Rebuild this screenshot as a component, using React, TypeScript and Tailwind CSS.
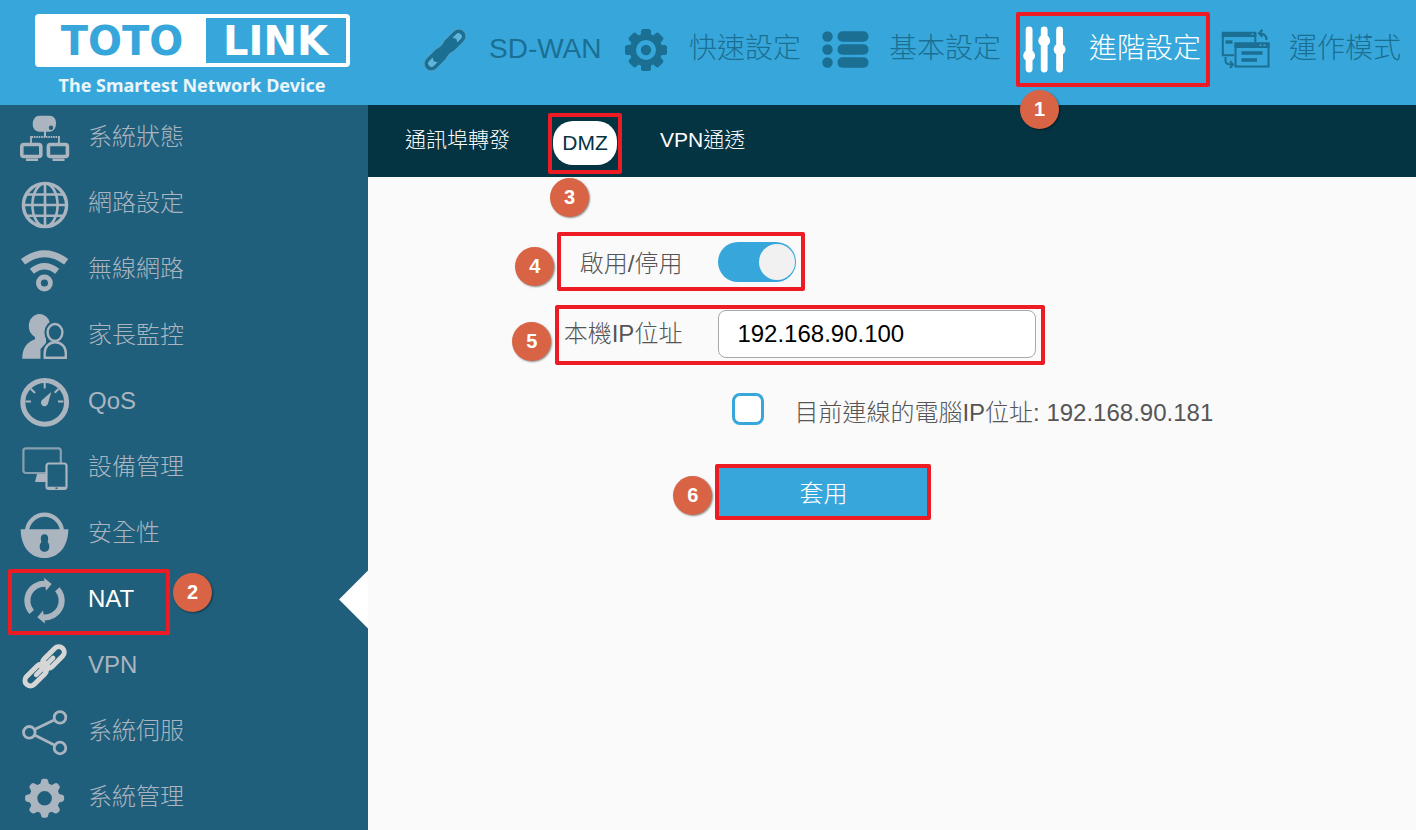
import { useState, type ReactNode } from "react";

type NavItem = {
  label: string;
  icon: ReactNode;
};

const GEAR_TEETH = [0, 45, 90, 135, 180, 225, 270, 315];

function SolidChainIcon() {
  return (
    <svg viewBox="0 0 48 48" className="size-12" aria-hidden="true">
      <g transform="translate(24 24) rotate(-45)">
        <path
          d="M-19.5 -7H-6Q0 -4.6 6 -7H19.5A7 7 0 0 1 19.5 7H6Q0 4.6 -6 7H-19.5A7 7 0 0 1 -19.5 -7Z"
          fill="currentColor"
          stroke="#6f9fb3"
          strokeWidth="0.6"
        />
        <path d="M-19 -3.4H-14L-16 0L-14 3.4H-19A3.4 3.4 0 0 1 -19 -3.4Z" fill="#5fb4da" />
        <path d="M19 -3.4H14L16 0L14 3.4H19A3.4 3.4 0 0 0 19 -3.4Z" fill="#5fb4da" />
      </g>
    </svg>
  );
}

function ChainIcon() {
  return (
    <svg
      viewBox="0 0 50 50"
      className="size-[50px] text-[#d6d6d6]"
      fill="none"
      stroke="currentColor"
      aria-hidden="true"
    >
      <g transform="translate(24.6 25.3) rotate(-45)">
        <rect x="-25.5" y="-5.5" width="26" height="11" rx="5.5" strokeWidth="5" />
        <rect x="-0.5" y="-5.5" width="26" height="11" rx="5.5" strokeWidth="5" />
        <path d="M-12 0H12" strokeWidth="4.6" strokeLinecap="round" />
        <path d="M-5 0H5" strokeWidth="10" />
      </g>
    </svg>
  );
}

function QuickSetupIcon() {
  return (
    <svg viewBox="0 0 48 48" className="size-12" aria-hidden="true">
      <g transform="translate(25 24)" fill="currentColor">
        {GEAR_TEETH.map((angle) => (
          <rect key={angle} x="-5" y="-21" width="10" height="10" rx="2.5" transform={`rotate(${angle})`} />
        ))}
        <circle r="13.2" fill="none" stroke="currentColor" strokeWidth="6.4" />
        <circle r="5.2" />
      </g>
    </svg>
  );
}

function ListIcon() {
  return (
    <svg viewBox="0 0 48 48" className="size-12" fill="currentColor" aria-hidden="true">
      {[11, 24, 37].map((y) => (
        <g key={y}>
          <circle cx="6.5" cy={y - 0.5} r="5.2" />
          <rect x="16.5" y={y - 5.8} width="31" height="10.6" rx="5" />
        </g>
      ))}
    </svg>
  );
}

function SlidersIcon() {
  return (
    <svg viewBox="0 0 48 48" className="size-12" fill="currentColor" aria-hidden="true">
      <rect x="4.7" y="0.5" width="6.8" height="46" rx="3.4" />
      <rect x="19.8" y="0.5" width="6.8" height="46" rx="3.4" />
      <rect x="35.2" y="0.5" width="6.8" height="46" rx="3.4" />
      <circle cx="8.1" cy="29.7" r="5.9" />
      <circle cx="23.2" cy="14.7" r="5.9" />
      <circle cx="38.6" cy="23.3" r="5.9" />
    </svg>
  );
}

function ModeIcon() {
  return (
    <svg viewBox="0 0 50 48" className="h-12 w-[50px]" fill="none" stroke="currentColor" aria-hidden="true">
      <path d="M2.8 7V29.2H14M35.3 7V16" strokeWidth="2" />
      <path d="M1.8 5.7H36.3V11H1.8Z" fill="currentColor" stroke="none" />
      <path d="M5.5 16H12.5" strokeWidth="3.4" />
      <rect x="15.5" y="17.5" width="33" height="23" strokeWidth="2" />
      <path d="M14.5 16.5H49.5V22H14.5Z" fill="currentColor" stroke="none" />
      <path d="M21.5 27H42.5M21.5 34H37" strokeWidth="3.6" />
      <path d="M39 7.3C44 7.3 46.5 9.5 46.5 14M42.5 3.8L39 7.3L42.5 10.8" strokeWidth="2" />
      <path d="M5.5 31V35C5.5 37.5 7 38.6 12.5 38.6M10 35.2L13 38.6L10 42" strokeWidth="2" />
      <path d="M31.5 8.3h2M39.5 19.3h2M43.5 19.3h2" stroke="#37a7db" strokeWidth="1.5" />
    </svg>
  );
}

function MenuIcon({ children }: { children: ReactNode }) {
  return (
    <svg viewBox="0 0 50 50" className="size-[50px]" fill="none" stroke="currentColor" aria-hidden="true">
      {children}
    </svg>
  );
}

const topItems: NavItem[] = [
  { label: "SD-WAN", icon: <SolidChainIcon /> },
  { label: "快速設定", icon: <QuickSetupIcon /> },
  { label: "基本設定", icon: <ListIcon /> },
  { label: "進階設定", icon: <SlidersIcon /> },
  { label: "運作模式", icon: <ModeIcon /> },
];

const sideItems: NavItem[] = [
  {
    label: "系統狀態",
    icon: (
      <MenuIcon>
        <path
          d="M19 2.7H30C34 2.7 36 6.5 36 10C36 15 33.5 18.7 29.5 18.7H19.5C15 18.7 12.7 15 12.7 11.5C12.7 6.5 15 3 19 2.7Z"
          fill="currentColor"
          stroke="none"
        />
        <circle cx="31" cy="14.7" r="2.2" fill="#1f5f7b" stroke="none" />
        <path d="M25 18V24" strokeWidth="2" />
        <path d="M11.5 24H39" strokeWidth="2" strokeDasharray="1.6 0.8" />
        <path d="M11 23V30M39 23V30" strokeWidth="1.8" />
        <rect x="1.8" y="31.5" width="19" height="12" rx="2" strokeWidth="3.6" />
        <rect x="28.4" y="31.5" width="19" height="12" rx="2" strokeWidth="3.6" />
        <path d="M6 46.7H18M32.5 46.7H44.5" strokeWidth="2.6" />
      </MenuIcon>
    ),
  },
  {
    label: "網路設定",
    icon: (
      <MenuIcon>
        <circle cx="25" cy="26" r="21.6" strokeWidth="3.4" />
        <ellipse cx="25" cy="26" rx="12.6" ry="21.6" strokeWidth="2.6" />
        <path d="M25 5V47M4 26H46M7 15.5H43M7 36.8H43" strokeWidth="2.6" />
      </MenuIcon>
    ),
  },
  {
    label: "無線網路",
    icon: (
      <MenuIcon>
        <path d="M3 16.8Q24.5 0.5 46.2 16.8" strokeWidth="6.8" />
        <path d="M11.8 26.3Q24.5 16.3 37.2 26.3" strokeWidth="6.4" />
        <circle cx="24.4" cy="38" r="6" strokeWidth="4.8" />
      </MenuIcon>
    ),
  },
  {
    label: "家長監控",
    icon: (
      <MenuIcon>
        <ellipse cx="19.5" cy="15" rx="10.7" ry="12" fill="currentColor" stroke="none" />
        <path d="M2.3 47.7C2.3 37 7 31 15 28.3V25H26V32L20.5 38V47.7Z" fill="currentColor" stroke="none" />
        <ellipse cx="35" cy="21.5" rx="7.6" ry="8.7" fill="#1f5f7b" stroke="#1f5f7b" strokeWidth="6" />
        <path
          d="M24.7 46.8V42C24.7 36 29 31.3 35.2 31.3S45.8 36 45.8 42V46.8Z"
          fill="#1f5f7b"
          stroke="#1f5f7b"
          strokeWidth="5"
        />
        <ellipse cx="35" cy="21.5" rx="7.4" ry="8.5" strokeWidth="2.4" />
        <path d="M24.7 46.8V42C24.7 36 29 31.3 35.2 31.3S45.8 36 45.8 42V46.8Z" strokeWidth="2.4" />
      </MenuIcon>
    ),
  },
  {
    label: "QoS",
    icon: (
      <MenuIcon>
        <circle cx="24.7" cy="25.3" r="21.9" strokeWidth="5" />
        <path d="M24.7 6V11.5M5.5 24.5H11M38 24.5H43.5M10.7 11.7L15 16M38.7 11.7L34.7 15.7" strokeWidth="2" />
        <path d="M31.3 15L28 26.5A3.6 3.6 0 1 1 22 23Z" fill="currentColor" stroke="none" />
      </MenuIcon>
    ),
  },
  {
    label: "設備管理",
    icon: (
      <MenuIcon>
        <rect x="3.4" y="5.4" width="37.4" height="24.6" rx="2.5" strokeWidth="2.2" opacity="0.75" />
        <path d="M17 31H26V39H15Z" fill="currentColor" stroke="none" />
        <rect x="26.5" y="20.5" width="20" height="25.5" rx="2.5" fill="#1f5f7b" strokeWidth="2.2" />
        <path d="M28 45.2H45" strokeWidth="3" />
        <path d="M35.5 45.2H37.5" stroke="#1f5f7b" strokeWidth="1.4" />
      </MenuIcon>
    ),
  },
  {
    label: "安全性",
    icon: (
      <MenuIcon>
        <path d="M7 21A17.7 18 0 0 1 42 21" strokeWidth="4.2" />
        <path
          fillRule="evenodd"
          d="M0.7 20.2H48.3C48.3 37 39 49 24.5 49S0.7 37 0.7 20.2ZM24.5 25.3C21.8 25.3 20.8 27 20.8 29.5L21.3 33C20 34.5 19.7 36 19.7 37.7C19.7 41 21.8 42.8 24.5 42.8S29.3 41 29.3 37.7C29.3 36 29 34.5 27.7 33L28.2 29.5C28.2 27 27.2 25.3 24.5 25.3Z"
          fill="currentColor"
          stroke="none"
        />
      </MenuIcon>
    ),
  },
  {
    label: "NAT",
    icon: (
      <MenuIcon>
        {[0, 180].map((angle) => (
          <g key={angle} transform={`rotate(${angle} 24.5 25.6)`}>
            <path d="M11.7 36.9A16.8 16.8 0 0 1 26 8.9" strokeWidth="6" />
            <path d="M24 2.8L31.7 9L26 15.7Z" fill="currentColor" stroke="none" />
          </g>
        ))}
      </MenuIcon>
    ),
  },
  { label: "VPN", icon: <ChainIcon /> },
  {
    label: "系統伺服",
    icon: (
      <MenuIcon>
        <path d="M14.5 22.6L34.7 12.8M14.5 28L34.7 38.3" strokeWidth="2.8" />
        <circle cx="9.3" cy="25.3" r="5.8" strokeWidth="2.8" />
        <circle cx="40" cy="10.4" r="5.8" strokeWidth="2.8" />
        <circle cx="40" cy="41" r="5.8" strokeWidth="2.8" />
      </MenuIcon>
    ),
  },
  {
    label: "系統管理",
    icon: (
      <MenuIcon>
        <g transform="translate(24.6 25.3)">
          {GEAR_TEETH.map((angle) => (
            <path
              key={angle}
              d="M-4.8 -13L-3.2 -18.2Q-2.6 -19.5 -1 -19.5H1Q2.6 -19.5 3.2 -18.2L4.8 -13Z"
              fill="currentColor"
              stroke="none"
              transform={`rotate(${angle})`}
            />
          ))}
          <circle r="11.2" strokeWidth="7.8" />
        </g>
      </MenuIcon>
    ),
  },
];

function Highlight({ className }: { className: string }) {
  return (
    <span
      className={`pointer-events-none absolute z-10 rounded-[2px] border-4 border-[#ed1c24] ${className}`}
    />
  );
}

function StepBadge({ step, className }: { step: number; className: string }) {
  return (
    <span
      className={`pointer-events-none absolute z-20 flex size-[39px] items-center justify-center rounded-full bg-[#d96445] pb-0.5 text-[20px] leading-5 font-bold text-white shadow-[1px_1px_2px_rgba(0,0,0,0.45)] ${className}`}
    >
      {step}
    </span>
  );
}

function Logo() {
  return (
    <a href="#home" className="flex w-[368px] shrink-0 flex-col items-center pt-3.5 pl-4">
      <span className="flex h-[53px] w-[315px] items-stretch rounded bg-white p-1 font-['DejaVu_Sans'] text-[40px] font-bold">
        <span className="flex flex-1 items-center justify-center leading-10 text-[#37a7db]">TOTO</span>
        <span className="flex w-[140px] items-center justify-center bg-[#37a7db] leading-10 text-white">
          LINK
        </span>
      </span>
      <span className="mt-1 font-['Noto_Sans'] text-[18px] leading-7 font-bold text-white/90">
        The Smartest Network Device
      </span>
    </a>
  );
}

export default function App() {
  const [enabled, setEnabled] = useState(true);
  const [ip, setIp] = useState("192.168.90.100");
  const [useCurrent, setUseCurrent] = useState(false);

  return (
    <div className="flex min-h-screen flex-col bg-[#fafafa] font-['Liberation_Sans','Noto_Sans_CJK_TC',sans-serif] font-light">
      <header className="flex h-[105px] bg-[#37a7db]">
        <Logo />
        <nav className="ml-12 flex flex-1">
          {topItems.map((item) => {
            const active = item.label === "進階設定";
            return (
              <a
                key={item.label}
                href="#top"
                className={`relative flex min-w-0 flex-1 items-center gap-[18px] pb-1.5 pl-[3px] text-[28px] leading-10 whitespace-nowrap ${
                  active ? "text-white" : "text-[#1a6f93]"
                }`}
              >
                <span className="flex w-[52px] shrink-0 justify-center">{item.icon}</span>
                <span className="pb-0.5">{item.label}</span>
                {active && (
                  <>
                    <Highlight className="top-3 left-0 h-[75px] w-[194px]" />
                    <StepBadge step={1} className="top-[90px] left-1" />
                  </>
                )}
              </a>
            );
          })}
        </nav>
      </header>

      <div className="flex flex-1">
        <nav className="w-[368px] shrink-0 bg-[#1f5f7b]">
          <ul>
            {sideItems.map((item) => {
              const active = item.label === "NAT";
              return (
                <li key={item.label} className="relative">
                  <a
                    href="#menu"
                    className="flex h-[66px] items-center gap-[18px] pl-5 text-[24px] leading-8 text-[#abb5c0]"
                  >
                    {item.icon}
                    <span className={active ? "pb-0.5 text-white" : "pb-0.5"}>{item.label}</span>
                  </a>
                  {active && (
                    <>
                      <Highlight className="top-0.5 left-2 h-[66px] w-[162px]" />
                      <StepBadge step={2} className="top-1.5 left-[173px]" />
                      <svg viewBox="0 0 30 60" className="absolute top-[3px] right-0 h-[59px] w-[29px]" aria-hidden="true">
                        <path d="M30 0V60L0 30Z" fill="#ffffff" />
                      </svg>
                    </>
                  )}
                </li>
              );
            })}
          </ul>
        </nav>

        <main className="min-w-0 flex-1">
          <nav className="flex h-[72px] items-center gap-[43px] bg-[#043342] pt-1 pl-[37px] text-[21px] leading-8 text-white">
            <a href="#forward" className="pb-1.5">
              通訊埠轉發
            </a>
            <a
              href="#dmz"
              className="relative flex h-11 w-16 items-center justify-center rounded-[20px] bg-white text-[#043342]"
            >
              DMZ
              <Highlight className="-top-2 -left-[5px] h-[61px] w-[74px]" />
              <StepBadge step={3} className="top-[57px] -left-[3px]" />
            </a>
            <a href="#vpn" className="pb-1.5">
              VPN通透
            </a>
          </nav>

          <form
            className="flex flex-col pt-[65px] text-[24px] leading-8 text-[#555555]"
            onSubmit={(event) => event.preventDefault()}
          >
            <div className="flex h-10 items-center gap-9">
              <label htmlFor="dmz-enabled" className="w-[30%] shrink-0 pt-1 text-right">
                啟用/停用
              </label>
              <div className="relative flex">
                <input
                  id="dmz-enabled"
                  type="checkbox"
                  role="switch"
                  checked={enabled}
                  onChange={(event) => setEnabled(event.target.checked)}
                  className="flex h-10 w-[78px] cursor-pointer appearance-none items-center rounded-full bg-gray-300 px-px before:size-9 before:rounded-full before:bg-[#f1f1f1] checked:justify-end checked:bg-[#37a7db]"
                />
                <Highlight className="-top-2.5 -left-[161px] h-[59px] w-[248px]" />
                <StepBadge step={4} className="top-[5px] -left-[203px]" />
              </div>
            </div>

            <div className="mt-7 flex h-12 items-center gap-9">
              <label htmlFor="dmz-ip" className="w-[30%] shrink-0 text-right">
                本機IP位址
              </label>
              <div className="relative flex">
                <input
                  id="dmz-ip"
                  type="text"
                  value={ip}
                  onChange={(event) => setIp(event.target.value)}
                  className="h-12 w-[318px] rounded-lg border border-[#a9a9a9] bg-white px-[18px] text-black outline-none focus:border-[#37a7db]"
                />
                <Highlight className="-top-[5px] -left-[163px] h-[60px] w-[490px]" />
                <StepBadge step={5} className="top-3 -left-[206px]" />
              </div>
            </div>

            <div className="mt-[35px] ml-[30%] flex items-start gap-[30px] pl-[50px]">
              <input
                id="dmz-current"
                type="checkbox"
                checked={useCurrent}
                onChange={(event) => setUseCurrent(event.target.checked)}
                className="size-8 shrink-0 cursor-pointer appearance-none rounded-lg border-3 border-[#37a7db] bg-white checked:bg-[#37a7db]"
              />
              <label htmlFor="dmz-current" className="pt-1">
                目前連線的電腦IP位址: 192.168.90.181
              </label>
            </div>

            <div className="mt-[39px] ml-[30%] flex pl-9">
              <div className="relative">
                <button
                  type="submit"
                  className="h-12 w-[210px] cursor-pointer bg-[#37a7db] pt-1 text-white"
                >
                  套用
                </button>
                <Highlight className="-inset-x-[3px] -inset-y-1" />
                <StepBadge step={6} className="top-2 -left-[45px]" />
              </div>
            </div>
          </form>
        </main>
      </div>
    </div>
  );
}
